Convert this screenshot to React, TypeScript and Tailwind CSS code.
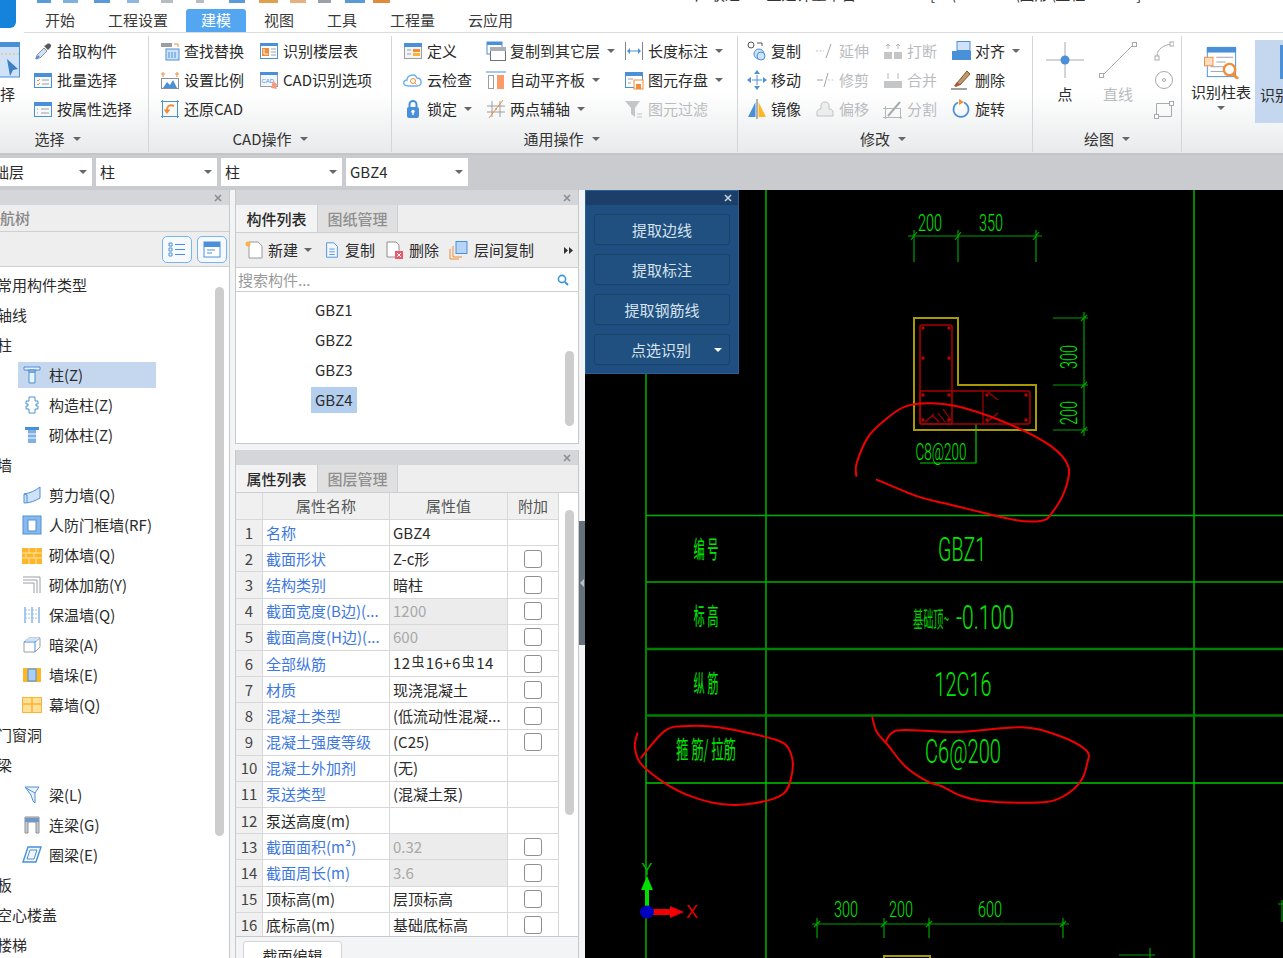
import React from "react";

const B = "#4a90d9", L = "#cfe2f7", O = "#f28c38", G = "#9a9ea3", Y = "#fdb52a";

const S = ({ children, w = 20, h = 20, vb = "0 0 20 20" }: { children: React.ReactNode; w?: number; h?: number; vb?: string }) => (
  <svg width={w} height={h} viewBox={vb} fill="none" className="shrink-0">{children}</svg>
);

const Form = ({ c }: { c: React.ReactNode }) => (
  <S>
    <rect x="1.5" y="3.5" width="17" height="14" fill="#f7fafd" stroke={B} />
    <rect x="1" y="3" width="18" height="4" fill={B} />
    {c}
  </S>
);

const I: Record<string, React.ReactNode> = {
  pick: <S><path d="M4 17l-1 1 1-4 7-7 3 3-7 7z" fill={L} stroke="#8a8f96" /><path d="M11 5l4 4 2-2c1-1 2-3 0-4s-3 0-4 1z" fill="#55595e" /><path d="M3 18l3-3" stroke={B} strokeWidth="2" /></S>,
  batch: <Form c={<><path d="M4 10l1 1 2-2M4 14l1 1 2-2" stroke={O} /><path d="M9 10h7M9 14h7" stroke={G} /></>} />,
  attr: <Form c={<path d="M4 10h1M8 10h8M4 14h1M8 14h8" stroke={G} />} />,
  find: <S><rect x="1" y="2" width="11" height="4" fill={G} /><path d="M14 3h4v3" stroke={O} /><rect x="6" y="8" width="13" height="11" fill={L} stroke={B} /><path d="M9 11v6M12 11v6M15 11v6" stroke={B} /></S>,
  scale: <S><path d="M3 2v5M1 4h4M15 4h4M17 2v5" stroke={O} /><rect x="1.5" y="8.5" width="17" height="10" fill="#fff" stroke="#8a8f96" /><path d="M3 18l4-6 3 3 3-5 4 8z" fill={B} /></S>,
  restore: <S><rect x="2.5" y="2.5" width="15" height="15" stroke={B} /><path d="M1 2.5h3M2.5 1v3M16 2.5h3M17.5 1v3M1 17.5h3M2.5 16v3M16 17.5h3M17.5 16v3" stroke={B} /><path d="M14 7c-4-2-7 0-7 4" stroke={O} strokeWidth="2" /><path d="M3.5 10.5h7L7 15z" fill={O} /></S>,
  floor: <S><rect x="1.5" y="2.5" width="17" height="15" fill="#fff" stroke={B} /><rect x="1" y="2" width="18" height="3" fill={B} /><rect x="3" y="7" width="7" height="8" fill={O} /><path d="M5 8v5h4" stroke="#fff" /><path d="M12 8h5M12 11h5M12 14h5" stroke={G} /></S>,
  cadopt: <S><rect x="1.5" y="2.5" width="17" height="14" fill="#f2f7fc" stroke={G} /><rect x="1" y="2" width="18" height="3" fill={B} /><text x="2.5" y="13" fontSize="6" fill={B} fontFamily="Liberation Sans">CAD</text><path d="M14 11l5 4-2 1 1 3-6-1z" fill="#f59a82" /></S>,
  def: <S><rect x="1.5" y="2.5" width="17" height="15" fill="#f4f4f4" stroke={G} /><rect x="1" y="2" width="18" height="4" fill={B} /><path d="M4 9h4M4 13h4" stroke={G} /><rect x="10" y="8" width="7" height="3" fill={O} /><rect x="10" y="12" width="7" height="3" fill={Y} /></S>,
  cloud: <S><path d="M5 16c-6 0-5-6-1-6 0-5 8-7 10-2 5 0 6 8 0 8z" fill="#fff" stroke="#6db1ee" strokeWidth="1.4" /><circle cx="10" cy="11" r="2.5" stroke={O} /><path d="M12 13l1.5 1.5" stroke={O} /></S>,
  lock: <S><rect x="4" y="8" width="12" height="11" rx="2" fill={B} /><path d="M6.5 8V5.5a3.5 3.5 0 017 0V8" stroke={B} strokeWidth="2" /><circle cx="10" cy="12.5" r="1.7" fill="#fff" /><path d="M10 13v3" stroke="#fff" strokeWidth="1.4" /></S>,
  copyf: <S><rect x="1" y="1" width="15" height="12" fill="#fff" stroke={B} /><rect x="1" y="1" width="15" height="3" fill={B} /><rect x="4.5" y="6.5" width="15" height="13" fill="#fff" stroke="#6d7277" /><rect x="4" y="6" width="16" height="4" fill="#aab0b5" /></S>,
  align: <S><path d="M0 2h20" stroke={B} /><rect x="2.5" y="5.5" width="5" height="13" fill="#fff" stroke={G} /><rect x="11" y="5" width="7" height="14" fill="#fb9c68" /></S>,
  axis: <S><path d="M6 2v16M14 2v16M1 7h18M1 13h18" stroke={G} /><path d="M17 1L3 19" stroke={O} /><circle cx="10" cy="10" r="1" fill={O} /></S>,
  len: <S><path d="M1.5 1v18M18.5 1v18" stroke="#7f858b" /><path d="M5 10h10" stroke={B} /><path d="M3 10l3-3v6zM17 10l-3-3v6z" fill={B} /></S>,
  save: <S><rect x="1.5" y="2.5" width="17" height="15" fill="#fff" stroke={B} /><rect x="1" y="2" width="18" height="4" fill={B} /><path d="M4 9h5M4 13h3" stroke={G} /><rect x="10" y="10" width="9" height="9" fill="#fff" stroke={O} /><rect x="12" y="14" width="5" height="5" fill={O} /></S>,
  filt: <S><path d="M1 2h15l-5 7v9l-4-3V9z" fill="#c4c6c8" /><path d="M13 15h5M13 18h5" stroke="#c4c6c8" /></S>,
  copy: <S><circle cx="4" cy="4" r="3" stroke="#555" /><path d="M10 2h5v3" stroke="#555" /><circle cx="12" cy="13" r="5" fill={L} stroke={B} /><circle cx="14" cy="15" r="4" fill={L} stroke={B} /></S>,
  move: <S><path d="M5 10h10M10 5v10" stroke={B} /><path d="M10 0l3 4H7zM10 20l3-4H7zM0 10l4-3v6zM20 10l-4-3v6z" fill={B} /></S>,
  mirror: <S><path d="M10 0v20" stroke="#666" /><path d="M8.5 3v15H1z" fill={B} /><path d="M11.5 3v15H19z" fill={Y} /></S>,
  ext: <S><path d="M1 10h8" stroke="#bcbfc2" strokeDasharray="2 1.5" /><path d="M16 3l-5 14" stroke="#9fa3a7" /></S>,
  trim: <S><path d="M2 10h6" stroke="#9fa3a7" /><path d="M9 17l4-14" stroke="#9fa3a7" /><path d="M13 10h6" stroke="#c6c9cb" strokeDasharray="2 1.5" /></S>,
  off: <S><path d="M2 17v-4c0-2 2-3 4-3V6c0-4 8-4 8 0v4c2 0 4 1 4 3v4z" fill="#eceded" stroke="#bfc2c4" /></S>,
  brk: <S><rect x="1" y="11" width="8" height="7" fill="#c3c5c7" /><rect x="11" y="11" width="8" height="7" fill="#c3c5c7" /><path d="M5 3v5M15 3v5M3 5l2-2 2 2M13 5l2-2 2 2" stroke="#b5b8ba" /></S>,
  mrg: <S><rect x="1" y="11" width="18" height="7" fill="#c3c5c7" /><path d="M5 3v6M15 3v6" stroke="#b5b8ba" /></S>,
  spl: <S><path d="M0 9.5h18M2.5 7v13M0 18.5h19M17.5 9v11" stroke="#b5b8ba" /><path d="M5 17L17 3" stroke="#a9acae" strokeWidth="2" /></S>,
  alg: <S><rect x="6" y="0.5" width="13" height="9" fill={L} stroke={B} /><rect x="1" y="10" width="19" height="9" fill={B} /></S>,
  del: <S><path d="M6 13L16 1l3 3-10 11z" fill="#c09a6b" stroke="#7a5532" /><path d="M6 12l3 3-4 2-2-1z" fill="#b0522c" /><path d="M0 19h16" stroke="#444" /></S>,
  rot: <S><path d="M13 3.5a7.5 7.5 0 11-6 0" stroke={B} strokeWidth="1.7" /><path d="M8 0l5 3-5 3z" fill={O} /></S>,
};

const Caret = ({ c = "#666" }: { c?: string }) => (
  <span className="inline-block w-0 h-0 border-l-[4px] border-r-[4px] border-t-[4px] border-l-transparent border-r-transparent" style={{ borderTopColor: c }} />
);

const Item = ({ icon, label, caret, off }: { icon: string; label: string; caret?: boolean; off?: boolean }) => (
  <div className={`flex items-center h-[29px] whitespace-nowrap ${off ? "text-[#b9bcbf]" : "text-[#2b2b2b]"}`}>
    {I[icon]}
    <span className="ml-[4px]">{label}</span>
    {caret && <span className="ml-[7px] flex"><Caret /></span>}
  </div>
);

const Group = ({ w, label, pad = "", children }: { w: string; label?: string; pad?: string; children: React.ReactNode }) => (
  <div className={`${w} shrink-0 h-[116px] mt-[3px] border-r border-[#d3d6d9] flex flex-col`}>
    <div className="flex h-[88px]">{children}</div>
    {label && (
      <div className={`mt-[2px] h-[26px] flex items-center justify-center gap-[8px] text-[#333] ${pad}`}>
        <span>{label}</span>
        <Caret />
      </div>
    )}
  </div>
);

const Col = ({ w, items }: { w: string; items: [string, string, boolean?, boolean?][] }) => (
  <div className={w}>
    {items.map((it) => <Item key={it[1]} icon={it[0]} label={it[1]} caret={it[2]} off={it[3]} />)}
  </div>
);

const tabs = ["开始", "工程设置", "建模", "视图", "工具", "工程量", "云应用"];

const quick: [number, number, string][] = [
  [13, 14, "#5a9ad8"], [12, 15, "#7fb0e0"], [16, 16, "#5a9ad8"], [17, 12, "#8fb8e0"], [22, 12, "#b9bcbf"], [23, 8, "#b9bcbf"],
  [25, 16, "#5a9ad8"], [14, 19, "#e0a050"], [12, 16, "#e8b080"], [12, 13, "#9aa0a6"], [14, 20, "#5a9ad8"], [8, 17, "#e08a3c"],
];

const Combo = ({ w, text, clip }: { w: string; text: string; clip?: boolean }) => (
  <div className={`${w} h-[28px] bg-white flex items-center justify-between pr-[5px] overflow-hidden ${clip ? "" : "pl-[4px]"}`}>
    <span className={clip ? "-ml-[6px]" : ""}>{text}</span>
    <Caret />
  </div>
);

const X = ({ c = "#8a8d91" }: { c?: string }) => (
  <svg width="8" height="8" viewBox="0 0 8 8"><path d="M1 1l6 6M7 1L1 7" stroke={c} strokeWidth="1.6" /></svg>
);

const PanelHead = () => (
  <div className="h-[15px] shrink-0 bg-[#d4d6da] flex items-center justify-end pr-[7px]"><X /></div>
);

const Thumb = ({ cls }: { cls: string }) => (
  <div className={`absolute w-[9px] rounded-full bg-[#cdcdcd] ${cls}`} />
);

const ti: Record<string, React.ReactNode> = {
  col: <S><path d="M2 2h16v3H2zM6 5h8l-1 2H7zM7 7h6v11H7z" stroke={B} fill="#eaf2fb" /></S>,
  gz: <S><path d="M7 2h6v4h3v3h-2v2h2v3h-3v4H7v-4H4v-3h2V9H4V6h3z" stroke={B} fill="#fff" /></S>,
  qt: <S><path d="M3 2h14v3H3z" fill={B} /><rect x="6" y="5" width="8" height="13" fill="#7fb0e6" /><path d="M6 9h8M6 13h8" stroke="#fff" /></S>,
  jl: <S><path d="M2 9c6-1 11-3 16-7v11c-5 3-10 5-16 5z" fill={L} stroke={B} /><path d="M2 9l3 1v8" stroke={B} /></S>,
  rf: <S><rect x="1" y="1" width="18" height="18" fill="#8ab8ec" stroke={B} /><rect x="6" y="5" width="8" height="11" fill="#fff" stroke={B} /></S>,
  qq: <S><rect x="0" y="3" width="20" height="16" fill={Y} /><path d="M0 8h20M0 13h20M7 3v5M14 3v5M4 8v5M12 8v5M7 13v6M14 13v6" stroke="#ffe3a8" /></S>,
  jj: <S><path d="M1 2h17v16M1 5h14v13M1 8h11v10" stroke={G} /></S>,
  bw: <S><path d="M3 2v16M10 2v16M17 2v16" stroke={B} /><path d="M10 5h7M10 9h7M10 13h7M3 5h7M3 9h7M3 13h7" stroke="#9cc5ef" strokeDasharray="2 1" /></S>,
  al: <S><path d="M2 7l5-4h11v9l-5 5H2z" fill="#fff" stroke={G} /><path d="M2 7h11v10M13 7l5-4" stroke={B} /><path d="M3 6l4-3h11l-4 3z" fill={L} /></S>,
  qd: <S><rect x="1" y="3" width="18" height="14" fill={Y} /><rect x="6" y="4" width="8" height="12" fill="#a9cdf3" stroke={B} /></S>,
  mq: <S><rect x="0.5" y="2.5" width="19" height="15" fill="#ffdf9a" stroke={Y} /><path d="M0 9h20M10 2v16" stroke={Y} strokeWidth="1.4" /></S>,
  l: <S><path d="M3 2h14l-4 6v10l-2-2-2-6z" fill="#eaf2fb" stroke={B} /><path d="M4 3l9 5" stroke={B} /></S>,
  ll: <S><path d="M3 2h14v16h-3V7H6v11H3z" fill="#c5cacf" stroke="#8d9297" /><rect x="3" y="3" width="14" height="4" fill="#6f98c8" /></S>,
  ql: <S><path d="M6 2h13l-5 15H1z" fill="#f2f7fc" stroke={B} strokeWidth="1.4" /><path d="M8 5h7l-3 9H5z" stroke={B} /></S>,
};

const tree: [string, string?][] = [
  ["常用构件类型"], ["轴线"], ["柱"], ["柱(Z)", "col"], ["构造柱(Z)", "gz"], ["砌体柱(Z)", "qt"], ["墙"],
  ["剪力墙(Q)", "jl"], ["人防门框墙(RF)", "rf"], ["砌体墙(Q)", "qq"], ["砌体加筋(Y)", "jj"], ["保温墙(Q)", "bw"],
  ["暗梁(A)", "al"], ["墙垛(E)", "qd"], ["幕墙(Q)", "mq"], ["门窗洞"], ["梁"], ["梁(L)", "l"], ["连梁(G)", "ll"], ["圈梁(E)", "ql"],
  ["板"], ["空心楼盖"], ["楼梯"],
];

type Row = { n: string; blue: boolean; v: React.ReactNode; off?: boolean; chk: boolean };
const Rebar = () => <span className="text-[13px] relative -top-[3px] mx-[1px]">虫</span>;
const rows: Row[] = [
  { n: "名称", blue: true, v: "GBZ4", chk: false },
  { n: "截面形状", blue: true, v: "Z-c形", chk: true },
  { n: "结构类别", blue: true, v: "暗柱", chk: true },
  { n: "截面宽度(B边)(...", blue: true, v: "1200", off: true, chk: true },
  { n: "截面高度(H边)(...", blue: true, v: "600", off: true, chk: true },
  { n: "全部纵筋", blue: true, v: <span className="tracking-[0.4px]">12<Rebar />16+6<Rebar />14</span>, chk: true },
  { n: "材质", blue: true, v: "现浇混凝土", chk: true },
  { n: "混凝土类型", blue: true, v: "(低流动性混凝...", chk: true },
  { n: "混凝土强度等级", blue: true, v: "(C25)", chk: true },
  { n: "混凝土外加剂", blue: true, v: "(无)", chk: false },
  { n: "泵送类型", blue: true, v: "(混凝土泵)", chk: false },
  { n: "泵送高度(m)", blue: false, v: "", chk: false },
  { n: "截面面积(m²)", blue: true, v: "0.32", off: true, chk: true },
  { n: "截面周长(m)", blue: true, v: "3.6", off: true, chk: true },
  { n: "顶标高(m)", blue: false, v: "层顶标高", chk: true },
  { n: "底标高(m)", blue: false, v: "基础底标高", chk: true },
];

const gridCols = "grid grid-cols-[27px_127px_118px_51px] w-[323px]";

const pathOf = (p: number[][]) => {
  let d = `M${p[0][0]} ${p[0][1]}`;
  for (let i = 0; i < p.length - 1; i++) {
    const a = p[Math.max(i - 1, 0)], b = p[i], c = p[i + 1], e = p[Math.min(i + 2, p.length - 1)];
    d += `C${b[0] + (c[0] - a[0]) / 6} ${b[1] + (c[1] - a[1]) / 6} ${c[0] - (e[0] - b[0]) / 6} ${c[1] - (e[1] - b[1]) / 6} ${c[0]} ${c[1]}`;
  }
  return d;
};
const z7 = (p: number[][]) => p.map(([x, y]) => [585 + x / 3, 190 + y / 3]);
const z8 = (p: number[][]) => p.map(([x, y]) => [585 + x / 2.246, 510 + y / 3]);

const scribbles = [
  z7([[814, 860], [815, 820], [850, 740], [900, 690], [960, 650], [1040, 640], [1140, 655], [1290, 710], [1400, 770], [1450, 830], [1440, 900], [1400, 970], [1370, 992], [1290, 990], [1100, 945], [1000, 920], [873, 868]]),
  z8([[118, 668], [112, 710], [125, 760], [180, 820], [240, 860], [310, 883], [380, 880], [445, 852], [465, 790], [462, 730], [430, 690], [300, 652], [230, 648], [180, 662], [125, 745]]),
  z8([[645, 620], [655, 665], [680, 705], [720, 770], [770, 815], [800, 828], [840, 855], [890, 872], [1000, 878], [1060, 868], [1110, 820], [1128, 760], [1125, 720], [1060, 675], [980, 652], [840, 666], [720, 660], [690, 668], [675, 695]]),
];

const GC = "#00a800";
const NumT = ({ x, y, w, s, t, c = "#00e800", rot }: { x: number; y: number; w: number; s: number; t: string; c?: string; rot?: boolean }) => (
  <text x={x} y={y} fontSize={s} fontWeight={300} fill={c} textAnchor="middle" textLength={w} lengthAdjust="spacingAndGlyphs" fontFamily="Roboto, Liberation Sans, sans-serif" transform={rot ? `rotate(-90 ${x} ${y})` : undefined}>{t}</text>
);
const CnT = ({ x, y, w, t }: { x: number; y: number; w: number; t: string }) => (
  <text x={x} y={y} fontSize="24" fill="#00e600" textAnchor="middle" textLength={w} lengthAdjust="spacingAndGlyphs" fontFamily="Noto Sans CJK SC, sans-serif">{t}</text>
);

const Cad = () => {
  const dots = [[923, 328], [949, 328], [923, 358], [949, 358], [923, 395], [949, 395], [923, 420], [949, 420], [987, 395], [987, 420], [1026, 395], [1026, 420]];
  return (
    <svg viewBox="585 190 698 768" fill="none" className="w-full h-full block">
      <g stroke={GC} strokeWidth="1.6">
        <path d="M646 374V958M766 190V958M1194 190V958" />
        <path d="M646 515.5H1283M646 582H1283" stroke="#00b000" />
        <path d="M646 649H1283M646 715.5H1283" stroke="#007f00" strokeWidth="2.4" />
        <path d="M646 783H1283" stroke="#00c800" />
      </g>
      <g stroke="#00a000" strokeWidth="1.2">
        <path d="M908 236H1042M914 230V262M958 230V262M1036 230V262M911 240L917 232M955 240L961 232M1033 240L1039 232" />
        <path d="M1053 318H1088M1053 385H1088M1053 430H1088M1084 312V436M1081 321L1087 315M1081 388L1087 382M1081 433L1087 427" />
        <path d="M812 924H1069M817 918V938M884 918V938M929 918V938M1063 918V938M814 927L820 921M881 927L887 921M926 927L932 921M1060 927L1066 921" />
        <path d="M976 424V463H920" stroke="#00d000" />
        <path d="M1119 955H1155M1150 948V958M1282 900V922M1278 904H1283" />
      </g>
      <path d="M884 958V956H930V958" stroke="#a89a00" strokeWidth="2" />
      <NumT x={930} y={231} w={24} s={23} t="200" />
      <NumT x={991} y={231} w={24} s={23} t="350" />
      <NumT x={1077} y={357} w={24} s={23} t="300" rot />
      <NumT x={1077} y={413} w={24} s={23} t="200" rot />
      <NumT x={941} y={460} w={51} s={23} t="C8@200" />
      <NumT x={846} y={917} w={24} s={22} t="300" />
      <NumT x={901} y={917} w={24} s={22} t="200" />
      <NumT x={990} y={917} w={24} s={22} t="600" />
      <NumT x={962} y={561} w={48} s={34} t="GBZ1" />
      <NumT x={985} y={629} w={58} s={34} t="-0.100" />
      <text x={931} y={627} fontSize="22" fill="#00d000" textAnchor="middle" textLength={36} lengthAdjust="spacingAndGlyphs" fontFamily="Noto Sans CJK SC, sans-serif">基础顶~</text>
      <NumT x={963} y={696} w={57} s={34} t="12C16" />
      <NumT x={963} y={763} w={76} s={34} t="C6@200" />
      <CnT x={706} y={558} w={25} t="编 号" />
      <CnT x={706} y={625} w={25} t="标 高" />
      <CnT x={706} y={692} w={25} t="纵 筋" />
      <CnT x={706} y={758} w={60} t="箍 筋/ 拉筋" />
      <path d="M914 318H958V385H1036V430H914Z" stroke="#a89a00" strokeWidth="2" />
      <g stroke="#a80000" strokeWidth="1.6">
        <rect x="920" y="325" width="32" height="99" rx="2" />
        <rect x="920" y="391" width="110" height="33" rx="2" />
        <path d="M983 391V424M925 422L934 414M939 422L932 415M945 422L938 413M951 420L943 409M988 392L998 400M987 422L998 413" strokeWidth="1.2" />
      </g>
      {dots.map(([x, y]) => <circle key={`${x}-${y}`} cx={x} cy={y} r="1.7" fill="#c00000" />)}
      {scribbles.map((p, i) => <path key={i} d={pathOf(p)} stroke="#f00000" strokeWidth="2" />)}
      <rect x="645" y="888" width="4" height="20" fill="#00e000" />
      <path d="M647 876L653 890H641Z" fill="#00e000" />
      <rect x="652" y="909" width="20" height="6" fill="#f00000" />
      <path d="M684 912L670 906V918Z" fill="#f00000" />
      <ellipse cx="647" cy="912" rx="7" ry="6.5" fill="#0000c0" />
      <text x={647} y={875} fontSize="17" fill="#00b000" textAnchor="middle" fontFamily="Liberation Sans, sans-serif">Y</text>
      <text x={692} y={918} fontSize="18" fill="#e00000" textAnchor="middle" fontFamily="Liberation Sans, sans-serif">X</text>
    </svg>
  );
};

const Btn = ({ t, caret }: { t: string; caret?: boolean }) => (
  <div className="relative h-[31px] rounded-[3px] bg-[#20507f] border border-[#1a4169] flex items-center justify-center text-[#d6e2ee]">
    <span className={caret ? "-ml-[2px]" : ""}>{t}</span>
    {caret && <span className="absolute right-[7px] top-[13px] flex"><Caret c="#fff" /></span>}
  </div>
);

export default function App() {
  return (
    <div className="w-[1283px] h-[958px] overflow-hidden relative bg-white text-[15px] leading-[20px] text-[#2b2b2b] font-['Noto_Sans_CJK_SC','Noto_Sans',sans-serif]">
      {/* title + tabs */}
      <div className="flex h-[33px] bg-white">
        <div className="w-[24px] shrink-0 h-[33px] pr-[8px]">
          <div className="h-[28px] rounded-br-[6px] bg-[#1583dc]" />
        </div>
        <div className="flex-1 flex flex-col border-b border-[#d9dbdd]">
          <div className="h-[9px] overflow-hidden flex">
            <div className="flex h-[3px] overflow-hidden w-[525px]">
              {quick.map(([m, w, c], i) => <div key={i} className="h-[3px] shrink-0" style={{ marginLeft: m, width: w, background: c }} />)}
            </div>
            <div className="ml-[146px] -mt-[16px] text-[#333] whitespace-nowrap">广联达BIM土建计量平台 GTJ2018 - [D:\GTJ2018\图形\工程1-1.GTJ]</div>
          </div>
          <div className="flex h-[24px] pl-[6px] gap-[3px]">
            {tabs.map((t) => (
              <div key={t} className={`px-[15px] flex items-center rounded-t-[3px] ${t === "建模" ? "bg-[#54a6f0] text-white" : "text-[#3a3a3a]"}`}>{t}</div>
            ))}
          </div>
        </div>
      </div>

      {/* ribbon */}
      <div className="h-[122px] flex bg-linear-to-b from-white via-white to-[#e8eaeb] border-b-[2px] border-[#c3c5c8]">
        <Group w="w-[149px]" label="选择" pad="pr-[33px]">
          <div className="w-[33px] overflow-hidden pt-[6px]">
            <svg width="33" height="37" viewBox="0 0 33 37" className="-ml-[13px]"><rect x="0.5" y="1" width="32" height="34" fill={L} stroke={B} /><rect x="0" y="0" width="33" height="5" fill={B} /><path d="M2 12h30" stroke="#f2b84b" strokeDasharray="2 2" /><path d="M20 17l11 10-5 1-3 6z" fill="#3d7fc4" /></svg>
            <div className="-ml-[15px] mt-[5px] whitespace-nowrap">选择</div>
          </div>
          <Col w="w-[100px]" items={[["pick", "拾取构件"], ["batch", "批量选择"], ["attr", "按属性选择"]]} />
        </Group>
        <Group w="w-[243px]" label="CAD操作">
          <div className="w-[11px]" />
          <Col w="w-[99px]" items={[["find", "查找替换"], ["scale", "设置比例"], ["restore", "还原CAD"]]} />
          <Col w="w-[110px]" items={[["floor", "识别楼层表"], ["cadopt", "CAD识别选项"]]} />
        </Group>
        <Group w="w-[346px]" label="通用操作" pad="pr-[6px]">
          <div className="w-[11px]" />
          <Col w="w-[83px]" items={[["def", "定义"], ["cloud", "云检查"], ["lock", "锁定", true]]} />
          <Col w="w-[138px]" items={[["copyf", "复制到其它层", true], ["align", "自动平齐板", true], ["axis", "两点辅轴", true]]} />
          <Col w="w-[100px]" items={[["len", "长度标注", true], ["save", "图元存盘", true], ["filt", "图元过滤", false, true]]} />
        </Group>
        <Group w="w-[295px]" label="修改" pad="pr-[4px]">
          <div className="w-[9px]" />
          <Col w="w-[68px]" items={[["copy", "复制"], ["move", "移动"], ["mirror", "镜像"]]} />
          <Col w="w-[68px]" items={[["ext", "延伸", false, true], ["trim", "修剪", false, true], ["off", "偏移", false, true]]} />
          <Col w="w-[68px]" items={[["brk", "打断", false, true], ["mrg", "合并", false, true], ["spl", "分割", false, true]]} />
          <Col w="w-[70px]" items={[["alg", "对齐", true], ["del", "删除"], ["rot", "旋转"]]} />
        </Group>
        <Group w="w-[149px]" label="绘图">
          <div className="w-[12px]" />
          <div className="w-[40px] flex flex-col items-center pt-[6px]">
            <svg width="38" height="36" viewBox="0 0 38 36"><path d="M0 18h38M19 0v36" stroke="#a6aaae" /><circle cx="19" cy="18" r="4.5" fill={B} /></svg>
            <div className="mt-[6px]">点</div>
          </div>
          <div className="w-[13px]" />
          <div className="w-[40px] flex flex-col items-center pt-[6px] text-[#b9bcbf]">
            <svg width="38" height="36" viewBox="0 0 38 36"><path d="M3 34L35 2" stroke="#a6aaae" /><rect x="0.5" y="31.5" width="4" height="4" fill="#fff" stroke="#a6aaae" /><rect x="33.5" y="0.5" width="4" height="4" fill="#fff" stroke="#a6aaae" /></svg>
            <div className="mt-[6px]">直线</div>
          </div>
          <div className="flex-1 flex flex-col items-center pl-[9px]">
            {[
              <g key="a"><path d="M3 15C3 8 10 4 17 3" stroke="#a6aaae" /><rect x="1" y="15" width="4" height="4" fill="#fff" stroke="#a6aaae" /><rect x="16" y="1" width="4" height="4" fill="#fff" stroke="#a6aaae" /></g>,
              <g key="b"><circle cx="10" cy="10" r="8.5" stroke="#a6aaae" /><circle cx="10" cy="10" r="1.5" stroke="#a6aaae" /></g>,
              <g key="c"><path d="M2.5 4.5h15v13h-15z" stroke="#a6aaae" /><rect x="15.5" y="2.5" width="4" height="4" fill="#fff" stroke="#a6aaae" /><rect x="0.5" y="15.5" width="4" height="4" fill="#fff" stroke="#a6aaae" /></g>,
            ].map((p) => <div key={p.key} className="h-[29px] flex items-center"><S>{p}</S></div>)}
          </div>
        </Group>
        <div className="flex-1 flex mt-[3px]">
          <div className="w-[72px] ml-[3px] -mr-[2px] flex flex-col items-center pt-[9px]">
            <svg width="38" height="34" viewBox="0 0 38 36"><rect x="4.5" y="3.5" width="30" height="30" fill="#fff" stroke={B} /><rect x="4" y="2" width="31" height="6" fill={B} /><path d="M14 13h18M14 18h10M8 23h14M8 28h14" stroke={G} /><rect x="1.5" y="13" width="9" height="9" fill="#fbdcc4" stroke={O} /><circle cx="28" cy="26" r="6" fill="#fff" stroke={O} strokeWidth="2.5" /><path d="M32 31l5 5" stroke={O} strokeWidth="3" /></svg>
            <div className="whitespace-nowrap mt-[3px]">识别柱表</div>
            <div className="flex mt-[4px]"><Caret /></div>
          </div>
          <div className="w-[28px] h-[83px] mt-[4px] bg-[#c5d7ee] pl-[5px] pt-[5px] overflow-hidden shrink-0">
            <div className="w-[40px] h-[34px] bg-[#4a90d9] ml-[20px]" />
            <div className="whitespace-nowrap mt-[6px]">识别</div>
          </div>
        </div>
      </div>

      {/* combos */}
      <div className="h-[35px] bg-[#c9cbcf] flex items-start pt-[3px] gap-[4px]">
        <Combo w="w-[92px]" text="础层" clip />
        <Combo w="w-[121px]" text="柱" />
        <Combo w="w-[121px]" text="柱" />
        <Combo w="w-[122px]" text="GBZ4" />
      </div>

      {/* main */}
      <div className="flex h-[768px] bg-[#f3f4f5]">
        {/* nav tree */}
        <div className="w-[230px] shrink-0 border-r border-[#c6c8ca] flex flex-col bg-white">
          <PanelHead />
          <div className="h-[27px] shrink-0 bg-[#eeeeee] border-b border-[#cdcfd2] flex items-center text-[#888] overflow-hidden">
            <span className="-ml-[15px] font-medium">导航树</span>
          </div>
          <div className="h-[35px] shrink-0 bg-[#eeeeee] border-b border-[#cdcfd2] flex items-center justify-end gap-[5px] pr-[2px]">
            {[
              <path key="a" d="M5 6h3v3H5zM5 11h3v3H5zM5 16h3v3H5zM11 7.5h10M11 12.5h10M11 17.5h10" stroke={B} />,
              <g key="b"><rect x="5" y="5" width="16" height="15" fill="#fff" stroke={B} /><rect x="5" y="5" width="16" height="5" fill={B} /><path d="M8 13h8M8 16h5" stroke={B} /></g>,
            ].map((p) => (
              <div key={p.key} className="w-[30px] h-[27px] border-[1.5px] border-[#76b4f2] rounded-[5px] bg-[#f6fafe] flex items-center justify-center">
                <svg width="26" height="25" viewBox="0 0 26 25" fill="none">{p}</svg>
              </div>
            ))}
          </div>
          <div className="relative flex-1 min-h-0 overflow-hidden pt-[3px]">
            <Thumb cls="left-[215px] top-[20px] h-[549px]" />
            {tree.map(([t, ic]) => (
              <div key={t} className="h-[30px] flex items-center whitespace-nowrap">
                {ic ? (
                  <div className={`ml-[18px] w-[138px] h-[26px] flex items-center pl-[4px] gap-[7px] ${t === "柱(Z)" ? "bg-[#c5d7ee]" : ""}`}>
                    {ti[ic]}
                    <span>{t}</span>
                  </div>
                ) : (
                  <span className="-ml-[3px]">{t}</span>
                )}
              </div>
            ))}
          </div>
        </div>

        <div className="w-[5px] shrink-0" />

        {/* middle column */}
        <div className="w-[344px] shrink-0 flex flex-col gap-[6px]">
          <div className="h-[254px] shrink-0 border border-[#c6c8ca] border-t-0 bg-white flex flex-col">
            <PanelHead />
            <div className="h-[28px] shrink-0 bg-[#eeeeee] border-b border-[#cdcfd2] flex">
              <div className="w-[82px] border-r border-[#cdcfd2] flex items-center justify-center font-medium bg-[#f3f3f3]">构件列表</div>
              <div className="w-[80px] bg-[#e0e0e0] border-r border-[#cdcfd2] flex items-center justify-center text-[#8f8f8f] font-medium">图纸管理</div>
            </div>
            <div className="h-[35px] shrink-0 bg-[#eeeeee] border-b border-[#cdcfd2] flex items-center pl-[8px] whitespace-nowrap">
              <S><path d="M5 2h9l4 4v12H5z" fill="#fff" stroke="#9a9a9a" /><circle cx="4" cy="4" r="2.5" fill="#f8b24c" /></S>
              <span className="ml-[4px]">新建</span>
              <span className="ml-[6px] flex"><Caret /></span>
              <span className="ml-[11px] flex"><S w={18}><path d="M4 2h8l4 4v12H4z" fill="#f2f7fc" stroke={B} /><path d="M7 9h6M7 12h6M7 15h6" stroke={B} /></S></span>
              <span className="ml-[4px]">复制</span>
              <span className="ml-[10px] flex"><S w={20}><path d="M2 2h9l3 3v12H2z" fill="#fff" stroke="#8f8f8f" /><rect x="10" y="11" width="8" height="8" fill="#e8596a" /><path d="M12 13l4 4M16 13l-4 4" stroke="#fff" /></S></span>
              <span className="ml-[4px]">删除</span>
              <span className="ml-[10px] flex"><S w={20}><rect x="7" y="1.5" width="11" height="12" fill="#b5d4f8" stroke={B} /><path d="M4 6v11h9M1 9v10h9" stroke={O} /></S></span>
              <span className="ml-[5px]">层间复制</span>
              <svg width="9" height="7" viewBox="0 0 9 7" className="ml-auto mr-[5px]"><path d="M0 0l4 3.5L0 7zM5 0l4 3.5L5 7z" fill="#333" /></svg>
            </div>
            <div className="h-[24px] shrink-0 border-b border-[#cdcfd2] flex items-center justify-between px-[2px] pr-[9px] text-[#9a9a9a]">
              <span>搜索构件...</span>
              <svg width="12" height="12" viewBox="0 0 12 12" fill="none"><circle cx="5" cy="5" r="3.6" stroke="#3d97d6" strokeWidth="1.6" /><path d="M8 8l3 3" stroke="#3d97d6" strokeWidth="2" /></svg>
            </div>
            <div className="relative flex-1 min-h-0 pt-[3px]">
              <Thumb cls="left-[329px] top-[59px] h-[75px]" />
              {["GBZ1", "GBZ2", "GBZ3", "GBZ4"].map((g) => (
                <div key={g} className="h-[30px] flex items-center pl-[75px]">
                  <div className={`px-[4px] h-[26px] flex items-center ${g === "GBZ4" ? "bg-[#b4cfee]" : ""}`}>{g}</div>
                </div>
              ))}
            </div>
          </div>

          <div className="flex-1 min-h-0 overflow-hidden border-x border-[#c6c8ca] bg-white flex flex-col relative">
            <PanelHead />
            <div className="h-[28px] shrink-0 bg-[#eeeeee] border-b border-[#cdcfd2] flex">
              <div className="w-[82px] border-r border-[#cdcfd2] flex items-center justify-center font-medium bg-[#f3f3f3]">属性列表</div>
              <div className="w-[80px] bg-[#e0e0e0] border-r border-[#cdcfd2] flex items-center justify-center text-[#8f8f8f] font-medium">图层管理</div>
            </div>
            <div className="h-[443px] shrink-0 overflow-hidden relative">
              <Thumb cls="left-[329px] top-[17px] h-[305px]" />
              <div className={`${gridCols} h-[27px] bg-[#f0f0f0] text-[#555]`}>
                <div className="border-r border-b border-[#d8d8d8]" />
                <div className="border-r border-b border-[#d8d8d8] flex items-center justify-center">属性名称</div>
                <div className="border-r border-b border-[#d8d8d8] flex items-center justify-center">属性值</div>
                <div className="border-r border-b border-[#d8d8d8] flex items-center justify-center">附加</div>
              </div>
              {rows.map((r, i) => (
                <div key={r.n} className={`${gridCols} h-[26.2px]`}>
                  <div className="bg-[#f0f0f0] border-r border-b border-[#d8d8d8] flex items-center justify-center text-[#444]">{i + 1}</div>
                  <div className={`border-r border-b border-[#d8d8d8] flex items-center pl-[3px] whitespace-nowrap overflow-hidden ${r.blue ? "text-[#3d78e0]" : "text-[#2b2b2b]"}`}>{r.n}</div>
                  <div className={`border-r border-b border-[#d8d8d8] flex items-center pl-[3px] whitespace-nowrap overflow-hidden ${r.off ? "bg-[#ececec] text-[#a8a8a8]" : "text-[#2b2b2b]"}`}>{r.v}</div>
                  <div className="border-r border-b border-[#d8d8d8] flex items-center justify-center">
                    {r.chk && <div className="w-[18px] h-[18px] rounded-[3px] border border-[#8f8f8f] bg-white" />}
                  </div>
                </div>
              ))}
            </div>
            <div className="h-[40px] shrink-0 bg-[#f3f4f5] border-t border-[#c6c8ca] pl-[7px] pt-[4px]">
              <div className="w-[99px] h-[30px] rounded-[3px] border border-[#d4d4d4] bg-white flex items-center justify-center">截面编辑</div>
            </div>
          </div>
        </div>

        {/* splitter */}
        <div className="w-[6px] shrink-0 pt-[331px]">
          <div className="h-[124px] bg-[#66707a] flex items-center justify-end pr-[1px]">
            <span className="w-0 h-0 border-y-[4px] border-r-[4px] border-y-transparent border-r-[#b9c0c6]" />
          </div>
        </div>

        {/* CAD */}
        <div className="flex-1 bg-black relative overflow-hidden">
          <Cad />
          <div className="absolute left-0 top-0 w-[154px] h-[184px] bg-[#1f4f80] border border-[#2a6099] flex flex-col">
            <div className="h-[14px] shrink-0 bg-[#1b3f68] flex items-center justify-end pr-[6px]"><X c="#c3d0dd" /></div>
            <div className="px-[8px] pt-[9px] flex flex-col gap-[9px]">
              <Btn t="提取边线" />
              <Btn t="提取标注" />
              <Btn t="提取钢筋线" />
              <Btn t="点选识别" caret />
            </div>
          </div>
        </div>
      </div>
    </div>
  );
}
